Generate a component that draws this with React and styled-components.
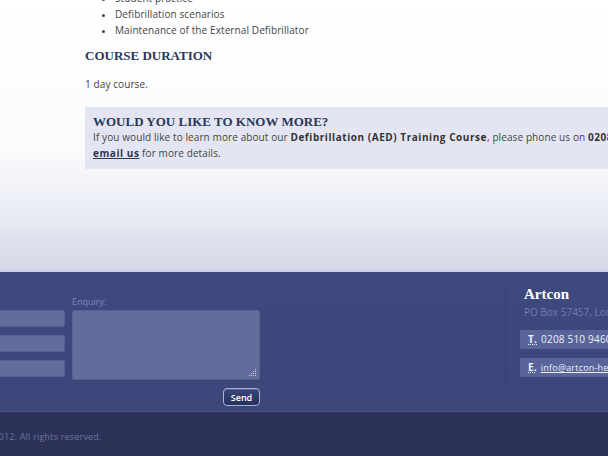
import styled, { createGlobalStyle } from "styled-components";

const Global = createGlobalStyle`
  html, body {
    margin: 0;
    padding: 0;
    overflow: hidden;
    background: #2b3157;
  }
  body {
    font-family: "Open Sans", "DejaVu Sans", sans-serif;
    width: 608px;
    height: 456px;
  }
`;

const Page = styled.div`
  width: 608px;
  height: 456px;
  overflow: hidden;
`;

const Main = styled.section`
  background: linear-gradient(to bottom, #ffffff 0px, #fbfbfd 150px, #e9ebf4 215px, #d3d7e7 270px);
  border-bottom: 2px solid #c9cee4;
  height: 270px;
  overflow: hidden;
`;

const Content = styled.div`
  padding-left: 85px;
  margin-top: -10px;
  width: 700px;
  color: #444;
  font-size: 10px;
  letter-spacing: 0.1px;
`;

const List = styled.ul`
  margin: 0;
  padding-left: 30px;
  line-height: 16px;
  list-style: disc;
  li::marker {
    font-size: 9px;
  }
`;

const Heading = styled.h2`
  font-family: "Liberation Serif", "Times New Roman", serif;
  font-weight: bold;
  font-size: 13px;
  letter-spacing: 0;
  color: #2b3858;
  margin: 9px 0 0;
  line-height: 18px;
`;

const Para = styled.p`
  margin: 11px 0 0;
  line-height: 16px;
`;

const InfoBox = styled.div`
  margin-top: 15px;
  background: #e3e6f2;
  padding: 8px 8px 8px;
  line-height: 16px;
  white-space: nowrap;
  ${Heading} {
    margin: 0;
    line-height: 14px;
  }
  strong {
    font-weight: bold;
    color: #333;
    letter-spacing: 0.55px;
  }
  a {
    color: #2b3656;
    font-weight: bold;
    letter-spacing: 0.55px;
    text-decoration: underline;
  }
`;

const Footer = styled.footer`
  background: linear-gradient(to bottom, #3e4a7f, #3b4779);
  height: 140px;
  box-sizing: border-box;
  border-bottom: 1px solid #4a5588;
`;

const FooterInner = styled.div`
  display: flex;
  margin-left: -125px;
  padding-top: 25px;
`;

const Form = styled.form`
  display: grid;
  grid-template-columns: 190px 188px;
  column-gap: 7px;
  align-items: start;
`;

const InputCol = styled.div`
  display: flex;
  flex-direction: column;
  gap: 8px;
  padding-top: 13px;
`;

const Field = styled.div`
  display: flex;
  flex-direction: column;
`;

const Label = styled.label`
  font-size: 9px;
  color: #7e89be;
  line-height: 10px;
  height: 13px;
`;

const Input = styled.div`
  height: 17px;
  background: #636d9b;
  border: 1px solid #57618f;
  border-radius: 2px;
  box-sizing: border-box;
`;

const TextArea = styled.div`
  position: relative;
  height: 70px;
  background: #636d9b;
  border: 1px solid #57618f;
  border-radius: 2px;
  box-sizing: border-box;
`;

const Grip = styled.svg`
  position: absolute;
  right: 2px;
  bottom: 2px;
`;

const SendRow = styled.div`
  grid-column: 2;
  display: flex;
  justify-content: flex-end;
  padding-top: 8px;
  padding-right: 0;
`;

const SendButton = styled.button`
  width: 37px;
  height: 18px;
  padding: 0;
  border: 1px solid #a9b1d6;
  border-radius: 4px;
  background: linear-gradient(to bottom, #3a4679, #25305e);
  color: #fff;
  font-family: "Open Sans", "DejaVu Sans", sans-serif;
  font-size: 9px;
  font-weight: 600;
  box-shadow: inset 0 1px 0 rgba(255, 255, 255, 0.15);
`;

const Contact = styled.div`
  margin-left: 245px;
  border-left: 1px solid #34406f;
  box-shadow: 1px 0 0 #46528a;
  padding-left: 14px;
  height: 96px;
  margin-top: -7px;
`;

const Company = styled.h3`
  font-family: "Liberation Serif", "Times New Roman", serif;
  font-size: 15px;
  font-weight: bold;
  color: #fff;
  margin: -4px 0 0 4px;
  line-height: 16px;
`;

const Address = styled.div`
  margin: 3px 0 0 4px;
  font-size: 10px;
  line-height: 14px;
  color: #6f7bb1;
  white-space: nowrap;
`;

const ContactBox = styled.div`
  margin-top: ${(p) => p.$top}px;
  width: 200px;
  height: 19px;
  box-sizing: border-box;
  padding: 0 8px;
  background: #59649a;
  color: #eef0f8;
  font-size: 10px;
  line-height: 19px;
  white-space: nowrap;
  letter-spacing: 0.2px;
  b {
    font-weight: bold;
    text-decoration: underline dotted;
    margin-right: 4px;
  }
  a {
    color: #eef0f8;
    text-decoration: underline;
    font-size: 9px;
  }
`;

const Bottom = styled.div`
  height: 44px;
  box-sizing: border-box;
  padding-top: 4px;
  display: flex;
  align-items: center;
  margin-left: -125px;
  font-size: 9px;
  color: #6b74a5;
  letter-spacing: 0.2px;
`;

export default function App() {
  return (
    <Page>
      <Global />
      <Main>
        <Content>
          <List>
            <li>Student practice</li>
            <li>Defibrillation scenarios</li>
            <li>Maintenance of the External Defibrillator</li>
          </List>
          <Heading>COURSE DURATION</Heading>
          <Para>1 day course.</Para>
          <InfoBox>
            <Heading>WOULD YOU LIKE TO KNOW MORE?</Heading>
            <div>
              If you would like to learn more about our <strong>Defibrillation (AED) Training Course</strong>, please phone us on <strong>0208 510 9460</strong> or
            </div>
            <div>
              <a href="#">email us</a> for more details.
            </div>
          </InfoBox>
        </Content>
      </Main>
      <Footer>
        <FooterInner>
          <Form>
            <InputCol>
              <Input />
              <Input />
              <Input />
            </InputCol>
            <Field>
              <Label>Enquiry:</Label>
              <TextArea>
                <Grip width="8" height="8" viewBox="0 0 8 8">
                  <g fill="#c9cde4">
                    <rect x="6" y="0" width="1" height="1" />
                    <rect x="4" y="2" width="1" height="1" />
                    <rect x="6" y="2" width="1" height="1" />
                    <rect x="2" y="4" width="1" height="1" />
                    <rect x="4" y="4" width="1" height="1" />
                    <rect x="6" y="4" width="1" height="1" />
                    <rect x="0" y="6" width="1" height="1" />
                    <rect x="2" y="6" width="1" height="1" />
                    <rect x="4" y="6" width="1" height="1" />
                    <rect x="6" y="6" width="1" height="1" />
                  </g>
                </Grip>
              </TextArea>
            </Field>
            <SendRow>
              <SendButton type="button">Send</SendButton>
            </SendRow>
          </Form>
          <Contact>
            <Company>Artcon</Company>
            <Address>PO Box 57457, London</Address>
            <ContactBox $top={11}>
              <b>T.</b>0208 510 9460
            </ContactBox>
            <ContactBox $top={9}>
              <b>E.</b><a href="#">info@artcon-health.co.uk</a>
            </ContactBox>
          </Contact>
        </FooterInner>
      </Footer>
      <Bottom>Copyright © Artcon Health 2012. All rights reserved.</Bottom>
    </Page>
  );
}
